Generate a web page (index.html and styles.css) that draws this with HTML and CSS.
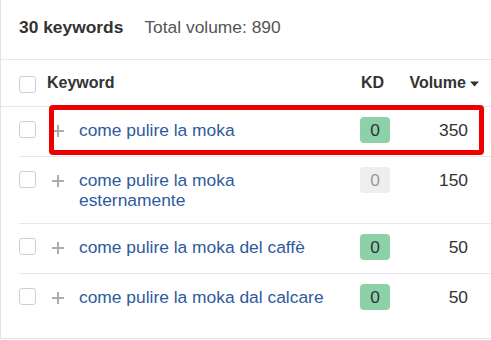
FILE: index.html
```html
<!DOCTYPE html>
<html lang="it">
<head>
<meta charset="utf-8">
<title>Keywords</title>
<link rel="stylesheet" href="styles.css">
</head>
<body>
<div class="panel">
  <div class="summary">
    <span class="count">30 keywords</span>
    <span class="total">Total volume: 890</span>
  </div>
  <div class="thead">
    <span class="cb"></span>
    <span class="th-kw">Keyword</span>
    <span class="th-kd">KD</span>
    <span class="th-vol">Volume <svg class="sort" width="9" height="6" viewBox="0 0 9 6"><path d="M0 0.5H9L4.5 5.5Z" fill="#333"/></svg></span>
  </div>
  <div class="row highlighted">
    <span class="cb"></span>
    <svg class="plus" width="12" height="12" viewBox="0 0 12 12"><path d="M6 0V12M0 6H12" stroke="#ababab" stroke-width="2"/></svg>
    <a class="kw">come pulire la moka</a>
    <span class="kd"><span class="badge green">0</span></span>
    <span class="vol">350</span>
    <span class="mark"></span>
  </div>
  <div class="row">
    <span class="cb"></span>
    <svg class="plus" width="12" height="12" viewBox="0 0 12 12"><path d="M6 0V12M0 6H12" stroke="#ababab" stroke-width="2"/></svg>
    <a class="kw">come pulire la moka esternamente</a>
    <span class="kd"><span class="badge grey">0</span></span>
    <span class="vol">150</span>
  </div>
  <div class="row">
    <span class="cb"></span>
    <svg class="plus" width="12" height="12" viewBox="0 0 12 12"><path d="M6 0V12M0 6H12" stroke="#ababab" stroke-width="2"/></svg>
    <a class="kw">come pulire la moka del caffè</a>
    <span class="kd"><span class="badge green">0</span></span>
    <span class="vol">50</span>
  </div>
  <div class="row last">
    <span class="cb"></span>
    <svg class="plus" width="12" height="12" viewBox="0 0 12 12"><path d="M6 0V12M0 6H12" stroke="#ababab" stroke-width="2"/></svg>
    <a class="kw">come pulire la moka dal calcare</a>
    <span class="kd"><span class="badge green">0</span></span>
    <span class="vol">50</span>
  </div>
</div>
</body>
</html>
```

FILE: styles.css
```css
* { box-sizing: border-box; }
html, body { margin: 0; padding: 0; background: #fff; }
body {
  font-family: "Liberation Sans", Arial, sans-serif;
  font-size: 17.4px;
  color: #333;
}
.panel {
  width: 491px;
  height: 339px;
  border-left: 1px solid #e3e3e3;
  border-bottom: 1px solid #e3e3e3;
}
.summary {
  display: flex;
  gap: 21px;
  padding: 17px 0 22px 18px;
  line-height: 20px;
  border-bottom: 1px solid #e8e8e8;
}
.count { font-weight: bold; color: #333; }
.total { color: #555; }

.cb {
  display: block;
  width: 17px;
  height: 17px;
  border: 1px solid #cfcfcf;
  border-radius: 3px;
  background: #fff;
}
.thead {
  display: grid;
  grid-template-columns: 28px 1fr 49px 70px;
  align-items: center;
  height: 47px;
  padding: 0 12px 0 18px;
  border-bottom: 1px solid #e8e8e8;
  font-size: 16px;
  font-weight: bold;
  line-height: 20px;
}
.thead .cb { margin-top: 2px; }
.th-kd { padding-left: 1px; }
.th-vol {
  display: flex;
  justify-content: flex-end;
  align-items: center;
  gap: 4px;
}
.sort { display: block; margin-top: 1px; }

.row {
  position: relative;
  display: grid;
  grid-template-columns: 33px 27px 1fr 49px 70px;
  align-items: start;
  margin-left: 18px;
  padding: 10px 12px 13px 0;
  border-bottom: 1px solid #e8e8e8;
  line-height: 20px;
}
.row.last { border-bottom: none; }
.row .cb { margin-top: 4px; }
.plus { display: block; margin-top: 8px; }
.kw {
  padding: 3px 24px 0 0;
  color: #2f5a9e;
  text-decoration: none;
}
.badge {
  display: block;
  width: 30px;
  height: 26px;
  line-height: 26px;
  border-radius: 4px;
  text-align: center;
}
.badge.green { background: #8dd1a8; color: #333; }
.badge.grey { background: #eeeeee; color: #999; }
.vol {
  padding: 3px 11px 0 0;
  text-align: right;
  color: #333;
}
.mark {
  position: absolute;
  left: 30px;
  top: -2px;
  width: 435px;
  height: 50px;
  border: 5px solid #ee0000;
  border-radius: 4px;
  pointer-events: none;
}
```
